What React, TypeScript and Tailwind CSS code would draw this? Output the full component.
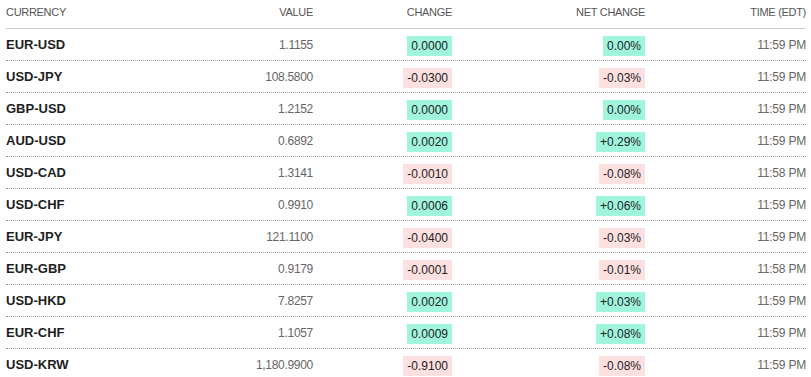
import React from "react";

// FX RATES TABLE DATA

interface RateRow {
    pair: string;
    value: string;
    change: string;
    net: string;
    time: string;
    up: boolean;
}

const rows: RateRow[] = [
    { pair: "EUR-USD", value: "1.1155", change: "0.0000", net: "0.00%", time: "11:59 PM", up: true },
    { pair: "USD-JPY", value: "108.5800", change: "-0.0300", net: "-0.03%", time: "11:59 PM", up: false },
    { pair: "GBP-USD", value: "1.2152", change: "0.0000", net: "0.00%", time: "11:59 PM", up: true },
    { pair: "AUD-USD", value: "0.6892", change: "0.0020", net: "+0.29%", time: "11:59 PM", up: true },
    { pair: "USD-CAD", value: "1.3141", change: "-0.0010", net: "-0.08%", time: "11:58 PM", up: false },
    { pair: "USD-CHF", value: "0.9910", change: "0.0006", net: "+0.06%", time: "11:59 PM", up: true },
    { pair: "EUR-JPY", value: "121.1100", change: "-0.0400", net: "-0.03%", time: "11:59 PM", up: false },
    { pair: "EUR-GBP", value: "0.9179", change: "-0.0001", net: "-0.01%", time: "11:58 PM", up: false },
    { pair: "USD-HKD", value: "7.8257", change: "0.0020", net: "+0.03%", time: "11:59 PM", up: true },
    { pair: "EUR-CHF", value: "1.1057", change: "0.0009", net: "+0.08%", time: "11:59 PM", up: true },
    { pair: "USD-KRW", value: "1,180.9900", change: "-0.9100", net: "-0.08%", time: "11:59 PM", up: false },
];

function Badge({ text, up }: { text: string; up: boolean }) {
    return (
        <span className={`inline-block h-[20px] px-[4px] leading-[20px] text-[12px] text-[#222] ${up ? "bg-[#a0f5dd]" : "bg-[#ffe0e0]"}`}>
            {text}
        </span>
    );
}

export default function App() {
    return (
        <div className="w-[811px] min-h-[377px] bg-white px-[6px]" style={{ fontFamily: '"Liberation Sans", Arial, sans-serif' }}>
            <div className="w-[800px]">

                {/* header */}
                <div className="flex h-[29px] border-b border-[#cfcfcf] pt-[5px] text-[11px] leading-[14px] font-medium uppercase tracking-[-0.3px] text-[#555]">
                    <div className="w-[147px]">Currency</div>
                    <div className="w-[160px] text-right">Value</div>
                    <div className="w-[139px] text-right">Change</div>
                    <div className="w-[193px] text-right">Net Change</div>
                    <div className="flex-1 text-right">Time (EDT)</div>
                </div>

                {rows.map((r, i) => (
                    <div key={i} className="flex h-[32px] items-center border-b border-dotted border-[#999]">
                        <div className="w-[147px] text-[13px] font-bold text-[#1e1e1e]">{r.pair}</div>
                        <div className="w-[160px] text-right text-[12px] text-[#666] tracking-[-0.3px]">{r.value}</div>
                        <div className="w-[139px] text-right"><Badge text={r.change} up={r.up} /></div>
                        <div className="w-[193px] text-right"><Badge text={r.net} up={r.up} /></div>
                        <div className="flex-1 text-right text-[12px] text-[#666] tracking-[-0.2px]">{r.time}</div>
                    </div>
                ))}
            </div>
        </div>
    );
}
